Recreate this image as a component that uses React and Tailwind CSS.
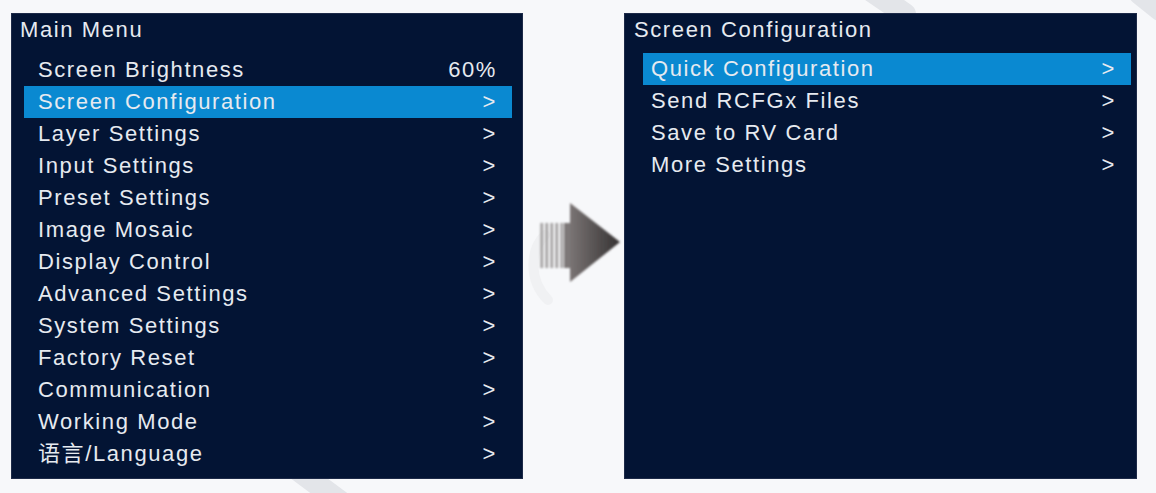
const MAIN_ITEMS = [
  { label: 'Screen Brightness', value: '60%' },
  { label: 'Screen Configuration', active: true },
  { label: 'Layer Settings' },
  { label: 'Input Settings' },
  { label: 'Preset Settings' },
  { label: 'Image Mosaic' },
  { label: 'Display Control' },
  { label: 'Advanced Settings' },
  { label: 'System Settings' },
  { label: 'Factory Reset' },
  { label: 'Communication' },
  { label: 'Working Mode' },
  { label: '语言/Language' },
]

const SUB_ITEMS = [
  { label: 'Quick Configuration', active: true },
  { label: 'Send RCFGx Files' },
  { label: 'Save to RV Card' },
  { label: 'More Settings' },
]

const FONT = { fontFamily: '"Liberation Sans", Arial, "Noto Sans CJK SC", sans-serif' }

function Row({ item, textPad }) {
  return (
    <div
      className={`h-8 flex items-center justify-between pr-[15px] leading-8 ${textPad} ${
        item.active ? 'bg-[#0a89d1]' : ''
      }`}
    >
      <span>{item.label}</span>
      <span>{item.value ?? '>'}</span>
    </div>
  )
}

function ArrowGlyph() {
  return (
    <svg width="101" height="86" viewBox="0 0 101 86">
      <defs>
        <linearGradient id="head" x1="0" y1="0" x2="1" y2="0">
          <stop offset="0" stopColor="#7a7474" />
          <stop offset="1" stopColor="#353232" />
        </linearGradient>
        <linearGradient id="bars" x1="0" y1="0" x2="1" y2="0">
          <stop offset="0" stopColor="#c9c9c9" />
          <stop offset="1" stopColor="#8a8686" />
        </linearGradient>
        <filter id="soft" x="-20%" y="-20%" width="140%" height="140%">
          <feGaussianBlur stdDeviation="0.8" />
        </filter>
      </defs>
      <g filter="url(#soft)">
        <rect x="17" y="22" width="3" height="45" fill="url(#bars)" />
        <rect x="22" y="22" width="3" height="45" fill="url(#bars)" />
        <rect x="27" y="22" width="3" height="45" fill="url(#bars)" />
        <rect x="32" y="22" width="3" height="45" fill="url(#bars)" />
        <rect x="37" y="22" width="3" height="45" fill="url(#bars)" />
        <rect x="41" y="22" width="8" height="45" fill="#7d7878" />
        <polygon points="47,2 97,41 47,81" fill="url(#head)" />
      </g>
    </svg>
  )
}

export default function App() {
  return (
    <div className="relative w-[1156px] h-[493px] bg-[#f7f8fa] overflow-hidden" style={FONT}>
      {/* faint watermark strokes */}
      <svg className="absolute inset-0" width="1156" height="493">
        <g stroke="#e3e5e9" strokeWidth="22" fill="none" strokeLinecap="round">
          <line x1="870" y1="-10" x2="905" y2="14" />
          <line x1="295" y1="468" x2="345" y2="505" />
          <line x1="1140" y1="-6" x2="1160" y2="10" />
          <path d="M548 300 C 528 280, 530 250, 545 235" strokeWidth="10" stroke="#f0f1f3" />
        </g>
      </svg>

      <div className="relative flex pl-[11px] pt-[13px] text-[22px] tracking-[1.6px] text-[#e6eaf0]">
        {/* left: main menu */}
        <div className="w-[512px] h-[466px] bg-[#031434] border border-[#1d2a48]">
          <div className="h-8 leading-8 pl-[8px]">Main Menu</div>
          <div className="mt-2 ml-[12px] mr-[10px]">
            {MAIN_ITEMS.map(item => (
              <Row key={item.label} item={item} textPad="pl-[14px]" />
            ))}
          </div>
        </div>

        {/* transition arrow */}
        <div className="w-[101px] pt-[188px]">
          <ArrowGlyph />
        </div>

        {/* right: submenu */}
        <div className="w-[513px] h-[466px] bg-[#031434] border border-[#1d2a48]">
          <div className="h-8 leading-8 pl-[9px]">Screen Configuration</div>
          <div className="mt-[7px] ml-[18px] mr-[5px]">
            {SUB_ITEMS.map(item => (
              <Row key={item.label} item={item} textPad="pl-[8px]" />
            ))}
          </div>
        </div>
      </div>
    </div>
  )
}
